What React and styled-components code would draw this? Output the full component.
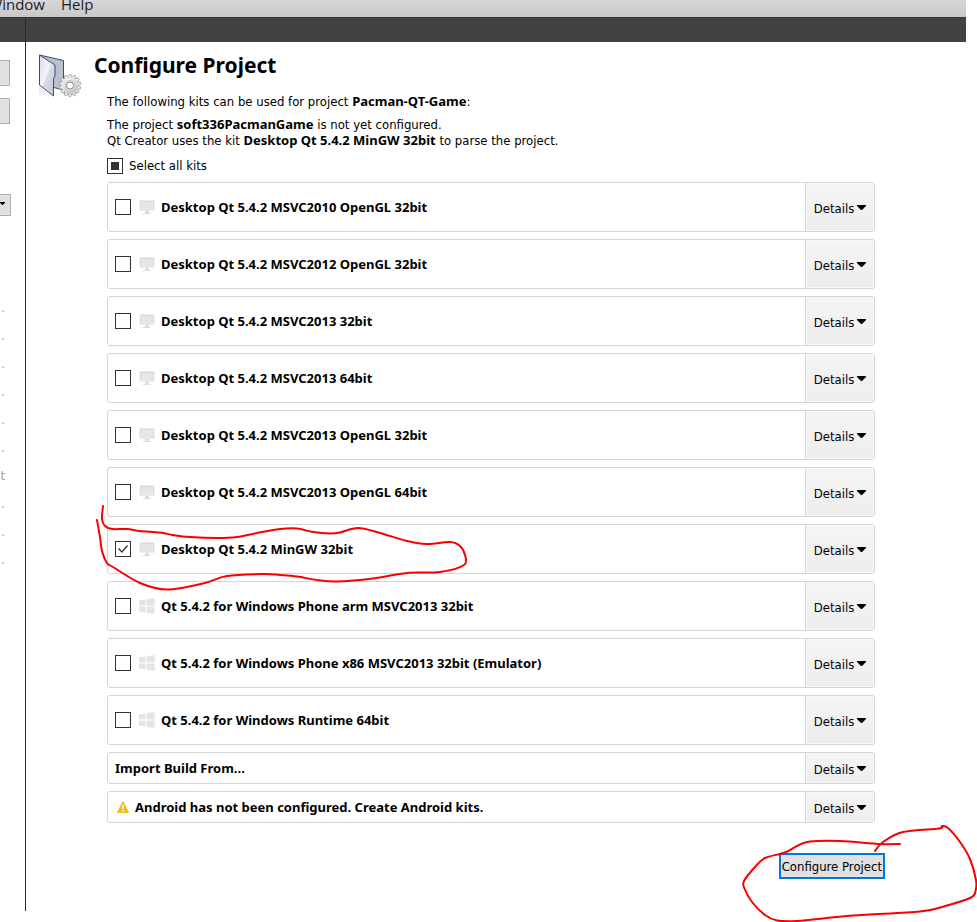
import React, { useEffect, useRef, useState } from "react";
import styled, { createGlobalStyle } from "styled-components";

const UI = '"DejaVu Sans Condensed", "DejaVu Sans", sans-serif';
const BOLD = '"Noto Sans", "Open Sans", sans-serif';

const GlobalStyle = createGlobalStyle`
  *, *::before, *::after { box-sizing: border-box; }
  html, body { margin: 0; background: #fff; }
  body { font: 13px/16px ${UI}; color: #000; }
  button, input { font: inherit; color: inherit; margin: 0; }
`;

const Window = styled.div`
  position: relative;
  display: flex;
  flex-direction: column;
  min-height: 100vh;
  padding: 0 11px 11px 0;
  overflow: hidden;
`;

const MenuBar = styled.nav`
  display: flex;
  justify-content: flex-start;
  gap: 16px;
  height: 17px;
  padding-right: 16px;
  background: linear-gradient(#d7d7d7, #c8c8c8);
`;

const MenuItem = styled.button`
  flex: none;
  height: 20px;
  margin-top: -6px;
  padding: 0;
  border: 0;
  background: none;
  font: 15px/20px "Open Sans", sans-serif;
  color: #1c1c28;

  &:first-child {
    width: 45px;
    display: flex;
    justify-content: flex-end;
  }
`;

const Workspace = styled.div`
  flex: 1;
  display: grid;
  grid-template-columns: 26px 1fr;
  grid-template-rows: 25px 1fr;
`;

const Strip = styled.div`
  background: #414243;
  border-top: 1px solid #35363a;
  border-right: ${p => (p.$divided ? "1px solid #29292c" : "0")};
`;

const Sidebar = styled.aside`
  display: flex;
  flex-direction: column;
  align-items: flex-start;
  padding-top: 18px;
  border-right: 1px solid #29292c;
`;

const SideButton = styled.button`
  width: 10px;
  height: 26px;
  margin-bottom: 12px;
  padding: 0;
  border: 1px solid #adadad;
  border-left: 0;
  background: #e1e1e1;
`;

const SideCombo = styled.button`
  display: flex;
  align-items: center;
  justify-content: flex-end;
  width: 11px;
  height: 22px;
  margin: 58px 0 78px;
  padding: 0 5px 0 0;
  border: 1px solid #adadad;
  border-left: 0;
  background: #e1e1e1;
`;

const SideList = styled.ul`
  width: 5px;
  margin: 0;
  padding: 0;
  list-style: none;
  color: #a0a0a0;
`;

const SideEntry = styled.li`
  display: flex;
  justify-content: flex-end;
  height: 28px;
  line-height: 28px;
`;

const Page = styled.main`
  display: flex;
  align-items: flex-start;
  gap: 12px;
  padding: 11px 81px 0 12px;
`;

const Content = styled.div`
  flex: 1;
  min-width: 0;
`;

const Title = styled.h1`
  margin: 0;
  font: 700 21px/24px ${BOLD};
`;

const Body = styled.div`
  padding-left: 13px;
`;

const Para = styled.p`
  margin: ${p => (p.$first ? "17px 0 7px" : "0 0 9px")};
`;

const Strong = styled.strong`
  font: 700 13px/15px ${BOLD};
`;

const CheckLabel = styled.label`
  display: flex;
  align-items: center;
  gap: 6px;
  width: fit-content;
  height: 16px;
`;

const Box = styled.input`
  appearance: none;
  flex: none;
  display: block;
  width: 16px;
  height: 16px;
  border: 1px solid #333;
  background: #fff;

  &::after {
    content: "";
    display: block;
    width: 14px;
    height: 14px;
  }
  &:checked::after {
    background: #333;
    clip-path: polygon(2px 7px, 3px 6px, 6px 9px, 11px 3px, 12px 4px, 6px 11px);
  }
  &:indeterminate::after {
    border: 3px solid #fff;
    background: #333;
  }
`;

const Panels = styled.div`
  display: flex;
  flex-direction: column;
  gap: 7px;
  margin: 8px 10px 0 0;
`;

const Panel = styled.section`
  display: flex;
  height: ${p => (p.$compact ? 32 : 50)}px;
  border: 1px solid #d5d5d5;
  border-radius: 3px;
  overflow: hidden;
`;

const PanelMain = styled.div`
  flex: 1;
  display: flex;
  align-items: center;
  padding-left: 7px;
`;

const KitLabel = styled.label`
  display: flex;
  align-items: center;
  gap: 8px;
`;

const KitName = styled.span`
  display: flex;
  align-items: center;
  gap: 6px;
  font: 700 13px/16px ${BOLD};
`;

const DetailsButton = styled.button`
  display: flex;
  align-items: center;
  justify-content: center;
  gap: 3px;
  width: 69px;
  padding: 4px 0 0;
  border: 0;
  border-left: 1px solid #d5d5d5;
  background: linear-gradient(#f5f5f5, #ededed);
  box-shadow: inset 0 0 0 1px #f8f8f8;
`;

const Arrow = styled.svg`
  display: block;
  width: 9px;
  height: 5px;
  margin-bottom: 3px;
`;

const Footer = styled.div`
  display: flex;
  justify-content: flex-end;
  margin-top: 30px;
`;

const PrimaryButton = styled.button`
  height: 26px;
  padding: 2px 1px 0;
  border: 2px solid #0078d7;
  background: #e1e1e1;
`;

const Ink = styled.svg`
  position: absolute;
  top: 0;
  left: 0;
  pointer-events: none;
`;

function DownArrow() {
  return (
    <Arrow viewBox="0 0 9 5" aria-hidden="true">
      <path d="M0 0H9V1L5 5H4L0 1Z" fill="#000" />
    </Arrow>
  );
}

function ProjectIcon() {
  const teeth = Array.from({ length: 14 }, (_, i) => (i * 360) / 14);
  return (
    <svg width="44" height="46" viewBox="0 0 44 46" aria-hidden="true">
      <defs>
        <linearGradient id="cover" x1="0" y1="0" x2="1" y2="1">
          <stop offset="0" stopColor="#d6dceb" />
          <stop offset="0.45" stopColor="#f4f5fa" />
          <stop offset="0.5" stopColor="#d9dde8" />
          <stop offset="1" stopColor="#bcc4d3" />
        </linearGradient>
        <linearGradient id="metal" x1="0" y1="0" x2="0.6" y2="1">
          <stop offset="0" stopColor="#fafafa" />
          <stop offset="1" stopColor="#c4c4c4" />
        </linearGradient>
        <linearGradient id="fade" x1="0" y1="0" x2="0" y2="1">
          <stop offset="0" stopColor="#dfe2ea" />
          <stop offset="1" stopColor="#fff" />
        </linearGradient>
      </defs>
      <path d="M1 33L14 43L6 42L1 45Z" fill="url(#fade)" />
      <path d="M1.5 2L25.5 7.5V37L14 34Z" fill="#b9c0ce" stroke="#3f4d70" />
      <path d="M1.5 2L17 12V23L15.500 26V43L1.500 32Z" fill="url(#cover)" stroke="#3f4d70" />
      <circle cx="31.500" cy="33.500" r="9" fill="#8c8c8c" />
      <g fill="#ececec" stroke="#8c8c8c" strokeWidth="0.6">
        {teeth.map(a => (
          <path key={a} d="M30 25L31 21.500H33L34 25Z" transform={`rotate(${a} 32 32.500)`} />
        ))}
      </g>
      <circle cx="32" cy="32.500" r="8.500" fill="url(#metal)" />
      <circle cx="32" cy="32.500" r="5" fill="#dedede" stroke="#cacaca" />
      <circle cx="32" cy="32.500" r="3.500" fill="#fff" stroke="#8c8c8c" />
    </svg>
  );
}

function DesktopIcon() {
  return (
    <svg width="16" height="16" viewBox="0 0 16 16" aria-hidden="true">
      <rect x="0.500" y="1" width="15" height="11" rx="1" fill="#ebecec" />
      <path d="M1.500 10.500V2.500H14.500V10.500" fill="none" stroke="#d9dbdb" />
      <rect x="2" y="3" width="12" height="8" fill="#e5e7e7" />
      <path d="M6 12H10V14H12V15H4V14H6Z" fill="#dcdede" />
    </svg>
  );
}

function WindowsIcon() {
  return (
    <svg width="16" height="16" viewBox="0 0 16 16" aria-hidden="true">
      <path d="M0 2.500L6.500 1.500V7.500H0ZM7.500 1.300L15.500 0V7.500H7.500ZM0 8.500H6.500V14.500L0 13.500ZM7.500 8.500H15.500V16L7.500 14.700Z" fill="#e3e5e5" />
    </svg>
  );
}

function WarningIcon() {
  return (
    <svg width="14" height="12" viewBox="0 0 14 12" aria-hidden="true">
      <path d="M8 0.500L13.500 11.500H2.500Z" fill="#efbf22" stroke="#efbf22" strokeLinejoin="round" />
      <path d="M8 4V8M8 9V10.500" stroke="#fff" strokeWidth="1.500" />
    </svg>
  );
}

function smooth(points) {
  let d = `M${points[0]}`;
  for (let i = 0; i < points.length - 1; i++) {
    const a = points[i - 1] || points[i];
    const b = points[i];
    const c = points[i + 1];
    const e = points[i + 2] || c;
    d += `C${b[0] + (c[0] - a[0]) / 6},${b[1] + (c[1] - a[1]) / 6} ${c[0] - (e[0] - b[0]) / 6},${c[1] - (e[1] - b[1]) / 6} ${c}`;
  }
  return d;
}

const kitLoop = [
  [103, 506], [102, 519], [105, 526], [112, 529], [127, 529], [140, 531], [160, 532.500], [173, 535],
  [190, 537], [217, 538], [237, 537], [257, 533], [280, 529], [297, 528.500], [313, 532],
  [330, 533.500], [340, 532.500], [358, 528], [380, 533], [407, 541], [427, 544], [450, 542],
  [460, 546], [465, 555], [464, 565], [440, 572], [407, 573], [373, 578.500], [337, 581.500], [317, 580],
  [297, 576.500], [280, 575], [263, 574], [227, 576], [203, 583.500], [167, 589.500], [140, 583],
  [113, 567], [107, 563], [102, 551], [100, 537], [97, 520],
];

const buttonLoop = [
  [900, 844], [880, 844], [840, 841], [810, 841.500], [798, 845.500], [785, 852.500], [765, 858],
  [755, 867], [744, 881], [744.500, 888.500], [752, 902], [765, 915], [777, 920.500], [797, 921],
  [853, 915.500], [920, 911.500], [947, 905.500], [971, 897.500], [975.500, 891], [976, 880], [970, 859],
  [960, 842], [948, 828], [942, 826], [939, 828.500], [903, 832], [883, 842], [875, 851],
];

const kits = [
  ["Desktop Qt 5.4.2 MSVC2010 OpenGL 32bit"],
  ["Desktop Qt 5.4.2 MSVC2012 OpenGL 32bit"],
  ["Desktop Qt 5.4.2 MSVC2013 32bit"],
  ["Desktop Qt 5.4.2 MSVC2013 64bit"],
  ["Desktop Qt 5.4.2 MSVC2013 OpenGL 32bit"],
  ["Desktop Qt 5.4.2 MSVC2013 OpenGL 64bit"],
  ["Desktop Qt 5.4.2 MinGW 32bit"],
  ["Qt 5.4.2 for Windows Phone arm MSVC2013 32bit", true],
  ["Qt 5.4.2 for Windows Phone x86 MSVC2013 32bit (Emulator)", true],
  ["Qt 5.4.2 for Windows Runtime 64bit", true],
];

const sideEntries = [".", ".", ".", ".", ".", ".", "t", ".", ".", "."];

function Details() {
  return (
    <DetailsButton type="button">
      Details
      <DownArrow />
    </DetailsButton>
  );
}

export default function App() {
  const [checked, setChecked] = useState(kits.map((_, i) => i === 6));
  const all = useRef(null);
  const every = checked.every(Boolean);
  const some = checked.some(Boolean);

  useEffect(() => {
    all.current.indeterminate = some && !every;
  }, [some, every]);

  return (
    <Window>
      <GlobalStyle />
      <MenuBar>
        <MenuItem type="button">Window</MenuItem>
        <MenuItem type="button">Help</MenuItem>
      </MenuBar>
      <Workspace>
        <Strip $divided />
        <Strip />
        <Sidebar>
          <SideButton type="button" aria-label="Previous" />
          <SideButton type="button" aria-label="Next" />
          <SideCombo type="button" aria-label="Choose">
            <DownArrow />
          </SideCombo>
          <SideList>
            {sideEntries.map((text, i) => (
              <SideEntry key={i}>{text}</SideEntry>
            ))}
          </SideList>
        </Sidebar>
        <Page>
          <ProjectIcon />
          <Content>
            <Title>Configure Project</Title>
            <Body>
              <Para $first>
                The following kits can be used for project <Strong>Pacman-QT-Game</Strong>:
              </Para>
              <Para>
                The project <Strong>soft336PacmanGame</Strong> is not yet configured.
                <br />
                Qt Creator uses the kit <Strong>Desktop Qt 5.4.2 MinGW 32bit</Strong> to parse the project.
              </Para>
              <CheckLabel>
                <Box
                  ref={all}
                  type="checkbox"
                  checked={every}
                  onChange={() => setChecked(kits.map(() => !every))}
                />
                Select all kits
              </CheckLabel>
              <Panels>
                {kits.map(([name, windows], i) => (
                  <Panel key={name}>
                    <PanelMain>
                      <KitLabel>
                        <Box
                          type="checkbox"
                          checked={checked[i]}
                          onChange={() => setChecked(checked.map((c, n) => (n === i ? !c : c)))}
                        />
                        <KitName>
                          {windows ? <WindowsIcon /> : <DesktopIcon />}
                          {name}
                        </KitName>
                      </KitLabel>
                    </PanelMain>
                    <Details />
                  </Panel>
                ))}
                <Panel $compact>
                  <PanelMain>
                    <KitName>Import Build From...</KitName>
                  </PanelMain>
                  <Details />
                </Panel>
                <Panel $compact>
                  <PanelMain>
                    <KitName>
                      <WarningIcon />
                      Android has not been configured. Create Android kits.
                    </KitName>
                  </PanelMain>
                  <Details />
                </Panel>
              </Panels>
              <Footer>
                <PrimaryButton type="button">Configure Project</PrimaryButton>
              </Footer>
            </Body>
          </Content>
        </Page>
      </Workspace>
      <Ink width="977" height="922" viewBox="0 0 977 922" fill="none" stroke="#f80000" strokeWidth="2" strokeLinecap="round" aria-hidden="true">
        <path d={smooth(kitLoop)} />
        <path d={smooth(buttonLoop)} />
      </Ink>
    </Window>
  );
}
